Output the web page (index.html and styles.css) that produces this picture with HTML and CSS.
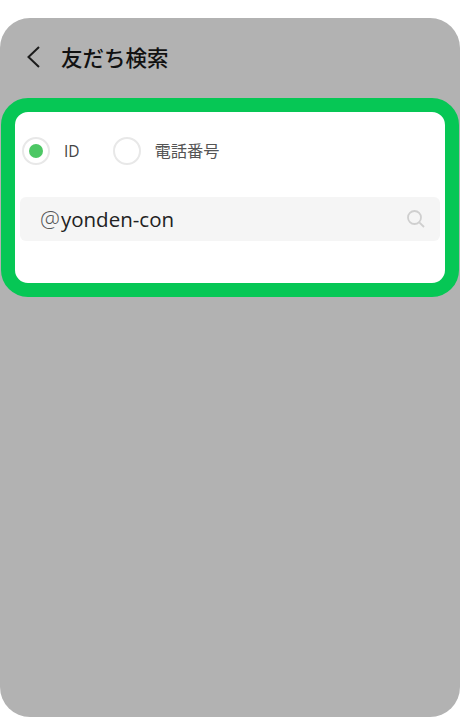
FILE: index.html
```html
<!DOCTYPE html>
<html lang="ja">
<head>
<meta charset="utf-8">
<title>友だち検索</title>
<link rel="stylesheet" href="styles.css">
</head>
<body>
<main class="phone">
  <header class="header">
    <svg class="back" width="16" height="24" viewBox="0 0 16 24" aria-hidden="true"><path d="M14 2 3.500 12 14 22" fill="none" stroke="#1c1c1c" stroke-width="2"/></svg>
    <h1 class="title">友だち検索</h1>
  </header>
  <section class="card">
    <div class="radios">
      <div class="radio-item">
        <span class="radio radio-on"><span class="dot"></span></span>
        <span class="label label-id">ID</span>
      </div>
      <div class="radio-item">
        <span class="radio"></span>
        <span class="label">電話番号</span>
      </div>
    </div>
    <div class="search">
      <span class="query"><span class="at">@</span>yonden-con</span>
      <svg class="lens" width="20" height="20" viewBox="0 0 20 20" aria-hidden="true"><circle cx="8.500" cy="8.500" r="6.500" fill="none" stroke="#cfcfcf" stroke-width="1.800"/><path d="M13.300 13.300 18 18" fill="none" stroke="#cfcfcf" stroke-width="1.800"/></svg>
    </div>
  </section>
</main>
</body>
</html>
```

FILE: styles.css
```css
* { box-sizing: border-box; }
html, body { margin: 0; padding: 0; background: #fff; }
body { height: 721px; overflow: hidden; padding-top: 18px; font-family: "Noto Sans CJK JP", "Noto Sans", sans-serif; }
.phone { width: 460px; height: 699px; background: #b2b2b2; border-radius: 30px; padding-top: 80px; position: relative; }
.header { position: absolute; top: 0; left: 0; right: 0; height: 80px; display: flex; align-items: center; padding-left: 25px; padding-bottom: 2px; }
.back { display: block; }
.title { margin: 0 0 0 20px; font-size: 21.500px; font-weight: 500; color: #111; line-height: 1; }
.card { margin: 0 1px; height: 199px; background: #fff; border: 14px solid #06c755; border-radius: 27px; padding: 0 5px; }
.radios { display: flex; align-items: center; height: 85px; padding-left: 2px; gap: 33px; padding-bottom: 8px; }
.radio-item { display: flex; align-items: center; }
.radio { width: 28px; height: 28px; border-radius: 50%; border: 2px solid #e8e8e8; background: #fff; display: flex; align-items: center; justify-content: center; }
.dot { width: 14px; height: 14px; border-radius: 50%; background: #4cc764; }
.label { margin-left: 14px; font-size: 16.250px; color: #555; line-height: 1; padding-bottom: 1px; }
.label-id { font-family: "Open Sans", sans-serif; font-size: 15.500px; color: #444; margin-left: 14px; padding-bottom: 0; padding-top: 2px; }
.search { height: 44px; background: #f5f5f5; border-radius: 6px; display: flex; align-items: center; justify-content: space-between; padding: 0 14px 0 20px; }
.query { font-family: "Open Sans", sans-serif; font-size: 20.500px; color: #222; line-height: 1; }
.at { font-size: 22.500px; color: #555; font-weight: 300; margin-right: 1px; }
.lens { display: block; }
```
